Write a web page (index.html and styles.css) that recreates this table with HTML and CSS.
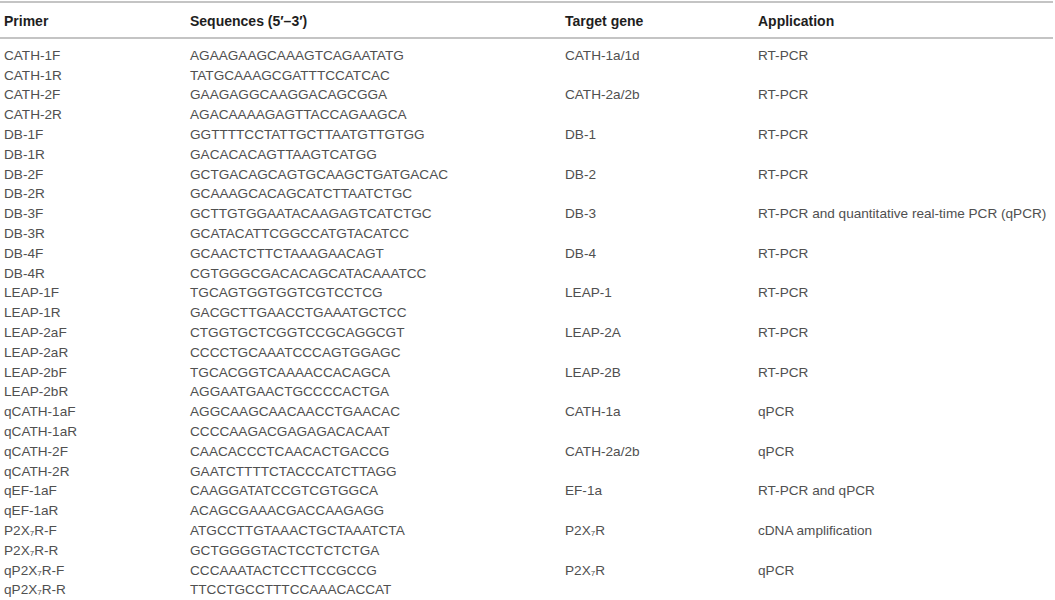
FILE: index.html
```html
<!DOCTYPE html>
<html>
<head>
<meta charset="utf-8">
<link rel="stylesheet" href="styles.css">
</head>
<body>
<table class="primers">
  <thead>
    <tr><th class="c1">Primer</th><th class="c2">Sequences (5′–3′)</th><th class="c3">Target gene</th><th class="c4">Application</th></tr>
  </thead>
  <tbody>
    <tr><td>CATH-1F</td><td>AGAAGAAGCAAAGTCAGAATATG</td><td>CATH-1a/1d</td><td>RT-PCR</td></tr>
    <tr><td>CATH-1R</td><td>TATGCAAAGCGATTTCCATCAC</td><td></td><td></td></tr>
    <tr><td>CATH-2F</td><td>GAAGAGGCAAGGACAGCGGA</td><td>CATH-2a/2b</td><td>RT-PCR</td></tr>
    <tr><td>CATH-2R</td><td>AGACAAAAGAGTTACCAGAAGCA</td><td></td><td></td></tr>
    <tr><td>DB-1F</td><td>GGTTTTCCTATTGCTTAATGTTGTGG</td><td>DB-1</td><td>RT-PCR</td></tr>
    <tr><td>DB-1R</td><td>GACACACAGTTAAGTCATGG</td><td></td><td></td></tr>
    <tr><td>DB-2F</td><td>GCTGACAGCAGTGCAAGCTGATGACAC</td><td>DB-2</td><td>RT-PCR</td></tr>
    <tr><td>DB-2R</td><td>GCAAAGCACAGCATCTTAATCTGC</td><td></td><td></td></tr>
    <tr><td>DB-3F</td><td>GCTTGTGGAATACAAGAGTCATCTGC</td><td>DB-3</td><td>RT-PCR and quantitative real-time PCR (qPCR)</td></tr>
    <tr><td>DB-3R</td><td>GCATACATTCGGCCATGTACATCC</td><td></td><td></td></tr>
    <tr><td>DB-4F</td><td>GCAACTCTTCTAAAGAACAGT</td><td>DB-4</td><td>RT-PCR</td></tr>
    <tr><td>DB-4R</td><td>CGTGGGCGACACAGCATACAAATCC</td><td></td><td></td></tr>
    <tr><td>LEAP-1F</td><td>TGCAGTGGTGGTCGTCCTCG</td><td>LEAP-1</td><td>RT-PCR</td></tr>
    <tr><td>LEAP-1R</td><td>GACGCTTGAACCTGAAATGCTCC</td><td></td><td></td></tr>
    <tr><td>LEAP-2aF</td><td>CTGGTGCTCGGTCCGCAGGCGT</td><td>LEAP-2A</td><td>RT-PCR</td></tr>
    <tr><td>LEAP-2aR</td><td>CCCCTGCAAATCCCAGTGGAGC</td><td></td><td></td></tr>
    <tr><td>LEAP-2bF</td><td>TGCACGGTCAAAACCACAGCA</td><td>LEAP-2B</td><td>RT-PCR</td></tr>
    <tr><td>LEAP-2bR</td><td>AGGAATGAACTGCCCCACTGA</td><td></td><td></td></tr>
    <tr><td>qCATH-1aF</td><td>AGGCAAGCAACAACCTGAACAC</td><td>CATH-1a</td><td>qPCR</td></tr>
    <tr><td>qCATH-1aR</td><td>CCCCAAGACGAGAGACACAAT</td><td></td><td></td></tr>
    <tr><td>qCATH-2F</td><td>CAACACCCTCAACACTGACCG</td><td>CATH-2a/2b</td><td>qPCR</td></tr>
    <tr><td>qCATH-2R</td><td>GAATCTTTTCTACCCATCTTAGG</td><td></td><td></td></tr>
    <tr><td>qEF-1aF</td><td>CAAGGATATCCGTCGTGGCA</td><td>EF-1a</td><td>RT-PCR and qPCR</td></tr>
    <tr><td>qEF-1aR</td><td>ACAGCGAAACGACCAAGAGG</td><td></td><td></td></tr>
    <tr><td>P2X<sub>7</sub>R-F</td><td>ATGCCTTGTAAACTGCTAAATCTA</td><td>P2X<sub>7</sub>R</td><td>cDNA amplification</td></tr>
    <tr><td>P2X<sub>7</sub>R-R</td><td>GCTGGGGTACTCCTCTCTGA</td><td></td><td></td></tr>
    <tr><td>qP2X<sub>7</sub>R-F</td><td>CCCAAATACTCCTTCCGCCG</td><td>P2X<sub>7</sub>R</td><td>qPCR</td></tr>
    <tr><td>qP2X<sub>7</sub>R-R</td><td>TTCCTGCCTTTCCAAACACCAT</td><td></td><td></td></tr>
  </tbody>
</table>
</body>
</html>
```

FILE: styles.css
```css
html, body {
  margin: 0;
  padding: 0;
  background: #ffffff;
}
body {
  font-family: "Liberation Sans", Arial, sans-serif;
  color: #505050;
}
.primers {
  width: 1053px;
  border-collapse: collapse;
  table-layout: fixed;
  margin-top: 1px;
  border-top: 2px solid #c4c4c4;
}
.primers th {
  font-weight: bold;
  color: #1e1e1e;
  font-size: 14px;
  text-align: left;
  height: 33px;
  padding: 1px 0 0 4px;
  border-bottom: 2px solid #c4c4c4;
  vertical-align: middle;
}
.primers th.c1 { width: 182px; }
.primers th.c2 { width: 371px; }
.primers th.c3 { width: 189px; }
.primers th.c4 { width: auto; }
.primers td {
  font-size: 13.6px;
  height: 19.8px;
  padding: 0 0 0 4px;
  white-space: nowrap;
  vertical-align: middle;
  line-height: 16px;
}
.primers tbody tr:first-child td {
  padding-top: 7px;
}
sub {
  font-size: 8px;
  vertical-align: -1px;
  line-height: 0;
}
```
